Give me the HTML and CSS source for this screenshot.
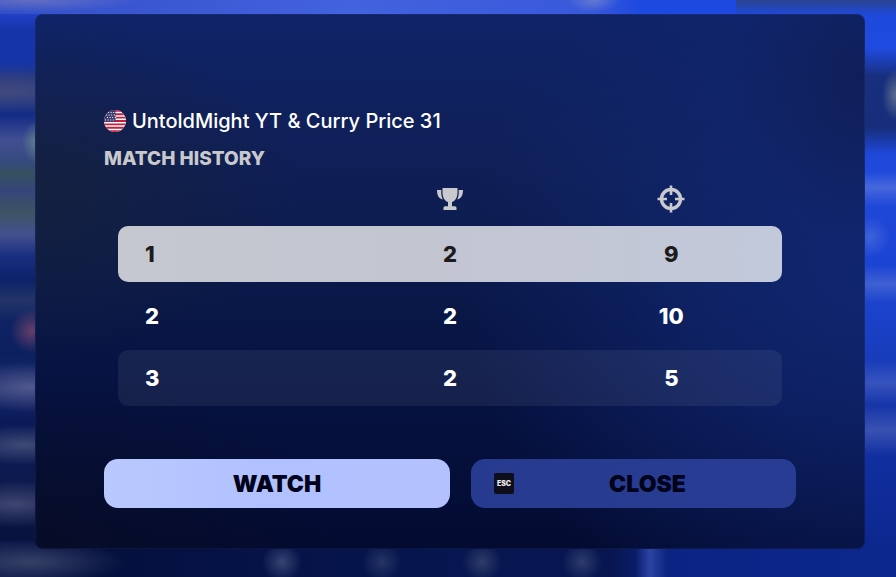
FILE: index.html
```html
<!DOCTYPE html>
<html lang="en">
<head>
<meta charset="utf-8">
<meta name="viewport" content="width=device-width, initial-scale=1">
<title>Match History</title>
<link rel="stylesheet" href="styles.css">
</head>
<body>
<main class="dialog">
  <header class="team">
    <svg class="flag" viewBox="0 0 22 22" aria-hidden="true">
      <defs><clipPath id="disc"><circle cx="11" cy="11" r="11"/></clipPath></defs>
      <g clip-path="url(#disc)">
        <rect width="22" height="22" fill="#fff"/>
        <path d="M0 .85h22M0 4.23h22M0 7.61h22M0 11h22M0 14.38h22M0 17.77h22M0 21.15h22" stroke="#c5203b" stroke-width="1.9"/>
        <rect width="11.5" height="11.8" fill="#3d3c70"/>
        <path d="M4 2.5h8M2 5h10M3 7.5h9M1 10h10" stroke="#fff" stroke-width="1" stroke-dasharray="1 1.6"/>
      </g>
    </svg>
    <span class="team-name">UntoldMight YT &amp; Curry Price 31</span>
  </header>
  <h1 class="title">MATCH HISTORY</h1>
  <table class="matches">
    <thead>
      <tr class="head">
        <th aria-label="Match"></th>
        <th aria-label="Placement">
          <svg class="icon" viewBox="0 0 28 28" aria-hidden="true">
            <path d="M6.500 3h15v4c0 5.500-2 8.700-5.500 10v4.300h3A1.500 1.500 0 0 1 20.500 22.800V25h-13v-2.200A1.500 1.500 0 0 1 9 21.300h3V17c-3.500-1.300-5.500-4.500-5.500-10z" fill="#c9cacd"/>
            <path d="M5.300 5H1c0 4.700 1.300 8.500 5.800 9.500-.8-1.600-1.300-3.500-1.500-5.500zM22.700 5H27c0 4.700-1.300 8.500-5.800 9.500.8-1.600 1.300-3.500 1.500-5.500z" fill="#c9cacd"/>
          </svg>
        </th>
        <th aria-label="Eliminations">
          <svg class="icon" viewBox="0 0 28 28" aria-hidden="true" fill="none" stroke="#c9cacd">
            <circle cx="14" cy="14" r="9.500" stroke-width="3.400"/>
            <path d="M14 .5v9.500M14 18v9.500M.5 14H10M18 14h9.500" stroke-width="2.600"/>
          </svg>
        </th>
      </tr>
    </thead>
    <tbody>
      <tr class="row selected"><td>1</td><td>2</td><td>9</td></tr>
      <tr class="row"><td>2</td><td>2</td><td>10</td></tr>
      <tr class="row shaded"><td>3</td><td>2</td><td>5</td></tr>
    </tbody>
  </table>
  <footer class="actions">
    <button class="button watch" type="button">WATCH</button>
    <button class="button close" type="button"><kbd class="key">ESC</kbd><span class="label">CLOSE</span></button>
  </footer>
</main>
</body>
</html>
```
FILE: styles.css
```css
* {
  box-sizing: border-box;
}

body {
  margin: 0;
  min-height: 100vh;
  padding: 14px 31px 28px 35px;
  font-family: Inter, "Liberation Sans", sans-serif;
  color: #fff;
  /* Out-of-focus lobby behind the dialog */
  background:
    radial-gradient(ellipse 110px 12px at 30px 0, rgba(130, 130, 190, 0.6), transparent),
    radial-gradient(ellipse 26px 12px at 594px 0, rgba(130, 145, 200, 0.6), transparent),
    linear-gradient(#2b448f, rgba(43, 68, 143, 0)) 100% 0 / 160px 16px no-repeat,
    linear-gradient(90deg, #3450c8, #4362de 350px, #3959dc 590px, #1d49e0 640px) 0 0 / 100% 14px no-repeat,
    radial-gradient(ellipse 90px 22px at 8px 91px, rgba(90, 85, 125, 0.5), transparent),
    radial-gradient(ellipse 16px 22px at 38px 142px, rgba(120, 165, 135, 0.6), transparent),
    radial-gradient(ellipse 22px 22px at 32px 331px, rgba(140, 75, 105, 0.7), transparent),
    radial-gradient(ellipse 80px 25px at 30px 387px, rgba(95, 100, 150, 0.8), transparent),
    radial-gradient(ellipse 80px 20px at 25px 445px, rgba(75, 85, 125, 0.8), transparent),
    radial-gradient(ellipse 80px 24px at 15px 504px, rgba(85, 90, 130, 0.7), transparent),
    radial-gradient(ellipse 95px 22px at 30px 562px, rgba(65, 75, 110, 0.8), transparent),
    radial-gradient(circle 20px at 282px 562px, rgba(65, 80, 125, 0.8), transparent),
    radial-gradient(circle 20px at 382px 562px, rgba(50, 65, 110, 0.7), transparent),
    radial-gradient(circle 20px at 482px 562px, rgba(55, 70, 110, 0.8), transparent),
    radial-gradient(circle 20px at 582px 562px, rgba(55, 70, 115, 0.8), transparent),
    linear-gradient(90deg, transparent 635px, rgba(52, 76, 175, 0.8) 650px, transparent 668px) 0 100% / 100% 28px no-repeat,
    linear-gradient(90deg, #0c174a, #04103e 100px, #061650 450px, #071650 610px, #0b2484 670px, #0c288e) 0 100% / 100% 36px no-repeat,
    radial-gradient(ellipse 14px 26px at 100% 95px, rgba(110, 125, 145, 0.8), transparent),
    radial-gradient(circle 20px at 870px 237px, rgba(75, 110, 220, 0.7), transparent),
    linear-gradient(#1e49dc 14px, #1f4be0 48px, #182f7e 76px, #172e7c 128px, #1f48d8 154px, #1f4adc 172px, #4767db 187px, #1f48d8 206px, #1c44d4 265px, #3f60d2 284px, #1b43cd 303px, #183cba 360px, #3753bd 383px, #1635a8 405px, #3851b2 430px, #112fa0 456px, #0c278e 549px) 100% 0 / 60px 100% no-repeat,
    linear-gradient(#2140c6 14px, #1534aa 30px, #1534aa 60px, #26397f 80px, #293d80 95px, #142c86 115px, #414f92 140px, #354a7d 162px, #37505f 174px, #35457b 191px, #3d5462 212px, #43508f 235px, #192e80 256px, #0c2269 280px, #233568 300px, #0e2264 322px, #0c2060 355px, #17286b 390px, #0b1b5a 420px, #0c1a50 475px, #08133f 530px);
}

.dialog {
  padding: 96px 69px 41px;
  border-radius: 8px;
  box-shadow: inset 0 0 0 1px rgba(80, 100, 190, 0.12);
  background:
    radial-gradient(ellipse 260px 170px at 0% 33%, rgba(23, 33, 56, 0.75), transparent),
    radial-gradient(ellipse 130px 160px at 100% 12%, rgba(16, 29, 84, 0.8), transparent),
    radial-gradient(ellipse 400px 380px at 100% 50%, rgba(17, 40, 118, 0.85), rgba(17, 40, 118, 0.6) 40%, transparent),
    radial-gradient(ellipse 300px 180px at 0% 100%, rgba(9, 13, 32, 0.6), transparent),
    linear-gradient(#0f2367, #0f1f56 30%, #0b1a4b 47%, #061241 70%, #030b31);
}

.team {
  display: flex;
  align-items: center;
  gap: 6px;
  height: 22px;
}

.flag {
  width: 22px;
  height: 22px;
}

.team-name {
  font-size: 20px;
  font-weight: 500;
  line-height: 22px;
}

.title {
  margin: 15px 0 13px;
  color: #c8c9cc;
  font-size: 19px;
  font-weight: 800;
  line-height: 24px;
}

.matches,
.matches thead {
  display: block;
}

.matches {
  margin: 0 14px;
}

.matches tbody {
  display: grid;
  gap: 6px;
  margin-top: 12px;
}

.head,
.row {
  display: grid;
  grid-template-columns: repeat(3, 1fr);
  align-items: center;
}

.head {
  height: 30px;
}

.matches th,
.matches td {
  padding: 0;
  text-align: center;
}

.icon {
  display: block;
  width: 28px;
  height: 28px;
  margin: 0 auto;
}

.row {
  height: 56px;
  border-radius: 10px;
  font-size: 22px;
  font-weight: 800;
  line-height: 28px;
}

.matches td:first-child {
  padding-left: 27px;
  text-align: left;
}

.selected {
  color: #1b1b1c;
  background: linear-gradient(90deg, #c5c8d0, #c3c5d1 45%, #c2c9da);
}

.shaded {
  background: rgba(255, 255, 255, 0.065);
}

.actions {
  display: grid;
  grid-template-columns: 346fr 325fr;
  gap: 21px;
  margin-top: 53px;
}

.button {
  display: flex;
  align-items: center;
  justify-content: center;
  gap: 8px;
  height: 49px;
  padding: 0 23px;
  border: 0;
  border-radius: 14px;
  color: #01031a;
  font-family: inherit;
  font-size: 23px;
  font-weight: 900;
  line-height: 28px;
}

.watch {
  background: linear-gradient(90deg, #b9c9ff, #b1c1ff 45%, #b3c1ff);
}

.close {
  background: linear-gradient(90deg, #263b8f, #293c94);
}

.key {
  display: grid;
  place-items: center;
  width: 20px;
  height: 21px;
  border-radius: 2px;
  color: #e8e8ea;
  background: #0d0d1c;
  font-family: inherit;
  font-size: 7px;
  font-weight: 900;
  line-height: 8px;
}

.label {
  flex: 1;
}
```
